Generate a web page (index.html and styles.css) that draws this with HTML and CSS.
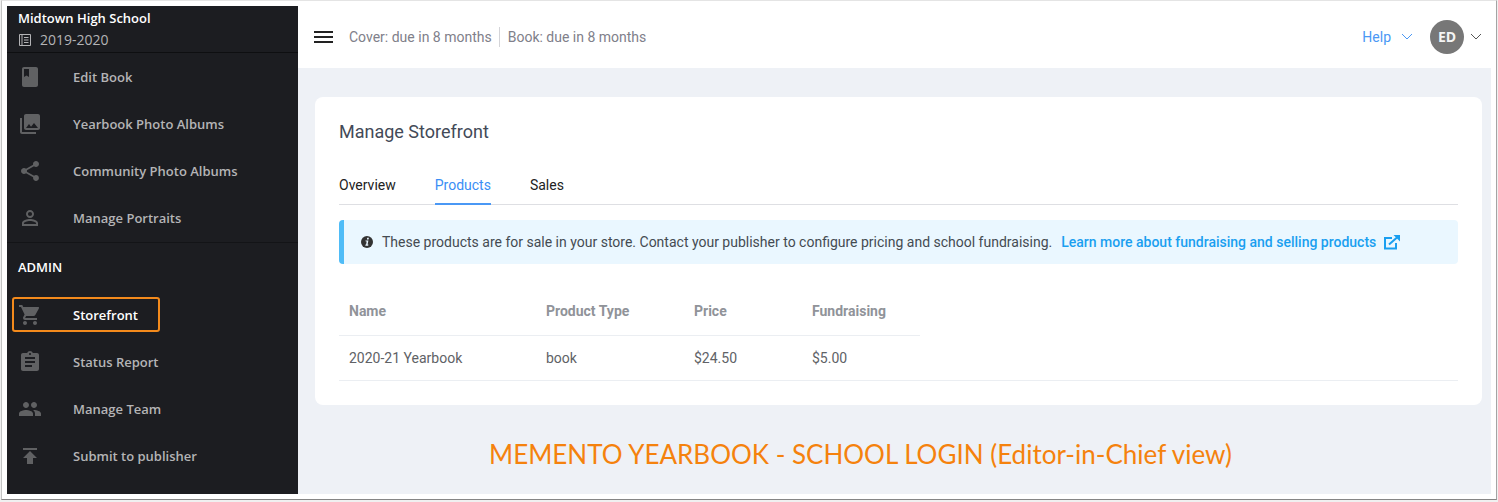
FILE: index.html
```html
<!DOCTYPE html>
<html lang="en">
<head>
<meta charset="utf-8">
<title>Manage Storefront</title>
<link rel="stylesheet" href="styles.css">
</head>
<body>
<div class="frame">
  <aside class="sidebar">
    <header class="school">
      <div class="school-name">Midtown High School</div>
      <div class="school-year">
        <svg class="year-icon" viewBox="0 0 14 14" fill="none" stroke="currentColor"><path d="M1.500 1.500h11v11h-11zM4 1.500v11M6 4.500h4.500M6 7h4.500M6 9.500h4.500"/></svg>
        <span>2019-2020</span>
      </div>
    </header>
    <nav>
      <ul class="menu">
        <li><a href="#"><svg viewBox="0 0 24 24"><path d="M18 2H6c-1.100 0-2 .9-2 2v16c0 1.100.9 2 2 2h12c1.100 0 2-.9 2-2V4c0-1.100-.9-2-2-2zM6 4h5v8l-2.500-1.500L6 12V4z"/></svg>Edit Book</a></li>
        <li><a href="#"><svg viewBox="0 0 24 24"><path d="M22 16V4c0-1.100-.9-2-2-2H8c-1.100 0-2 .9-2 2v12c0 1.100.9 2 2 2h12c1.100 0 2-.9 2-2zm-11-4l2.030 2.710L16 11l4 5H8l3-4zM2 6v14c0 1.100.9 2 2 2h14v-2H4V6H2z"/></svg>Yearbook Photo Albums</a></li>
        <li><a href="#"><svg viewBox="0 0 24 24"><path d="M18 16.080c-.76 0-1.440.3-1.960.77L8.910 12.700c.05-.23.09-.46.09-.7s-.04-.47-.09-.7l7.050-4.110c.54.5 1.250.81 2.040.81 1.660 0 3-1.340 3-3s-1.340-3-3-3-3 1.340-3 3c0 .24.04.47.09.7L8.040 9.810C7.500 9.310 6.790 9 6 9c-1.660 0-3 1.340-3 3s1.340 3 3 3c.79 0 1.500-.31 2.040-.81l7.120 4.160c-.05.21-.08.43-.08.65 0 1.610 1.310 2.920 2.920 2.920s2.920-1.310 2.920-2.920-1.310-2.920-2.920-2.920z"/></svg>Community Photo Albums</a></li>
        <li><a href="#"><svg viewBox="0 0 24 24"><path d="M12 5.900a2.100 2.100 0 1 1 0 4.200 2.100 2.100 0 0 1 0-4.200m0 9c2.970 0 6.100 1.460 6.100 2.100v1.100H5.900V17c0-.64 3.130-2.100 6.100-2.100M12 4C9.790 4 8 5.790 8 8s1.790 4 4 4 4-1.790 4-4-1.790-4-4-4zm0 9c-2.670 0-8 1.340-8 4v3h16v-3c0-2.660-5.330-4-8-4z"/></svg>Manage Portraits</a></li>
      </ul>
      <h2 class="menu-title">ADMIN</h2>
      <ul class="menu">
        <li><a href="#" class="current" aria-current="page"><svg viewBox="0 0 24 24"><path d="M7 18c-1.100 0-1.990.9-1.990 2S5.900 22 7 22s2-.9 2-2-.9-2-2-2zM1 2v2h2l3.600 7.590-1.350 2.450c-.16.28-.25.61-.25.96 0 1.100.9 2 2 2h12v-2H7.420c-.14 0-.25-.11-.25-.25l.03-.12.9-1.630h7.450c.75 0 1.410-.41 1.750-1.030l3.580-6.490A1 1 0 0 0 20 4H5.210l-.94-2H1zm16 16c-1.100 0-1.990.9-1.990 2s.89 2 1.990 2 2-.9 2-2-.9-2-2-2z"/></svg>Storefront</a></li>
        <li><a href="#"><svg viewBox="0 0 24 24"><path d="M19 3h-4.180C14.400 1.840 13.300 1 12 1s-2.400.84-2.820 2H5c-1.100 0-2 .9-2 2v14c0 1.100.9 2 2 2h14c1.100 0 2-.9 2-2V5c0-1.100-.9-2-2-2zm-7 0c.55 0 1 .45 1 1s-.45 1-1 1-1-.45-1-1 .45-1 1-1zm2 14H7v-2h7v2zm3-4H7v-2h10v2zm0-4H7V7h10v2z"/></svg>Status Report</a></li>
        <li><a href="#"><svg viewBox="0 0 24 24"><path d="M16 11c1.660 0 2.990-1.340 2.990-3S17.660 5 16 5s-3 1.340-3 3 1.340 3 3 3zm-8 0c1.660 0 2.990-1.340 2.990-3S9.660 5 8 5 5 6.340 5 8s1.340 3 3 3zm0 2c-2.330 0-7 1.170-7 3.500V19h14v-2.500C15 14.170 10.330 13 8 13zm8 0c-.29 0-.62.02-.97.05 1.160.84 1.970 1.970 1.970 3.450V19h6v-2.500c0-2.330-4.670-3.500-7-3.500z"/></svg>Manage Team</a></li>
        <li><a href="#"><svg viewBox="0 0 24 24"><path d="M5 4v2h14V4H5zm0 10h4v6h6v-6h4l-7-7-7 7z"/></svg>Submit to publisher</a></li>
      </ul>
    </nav>
  </aside>
  <div class="page">
    <header class="topbar">
      <button class="toggle" type="button" aria-label="Toggle menu"><svg viewBox="0 0 20 14"><path d="M0 1h19v2H0zM0 6h19v2H0zM0 11h19v2H0z"/></svg></button>
      <span class="due">Cover: due in 8 months</span>
      <span class="due due-next">Book: due in 8 months</span>
      <button class="help" type="button">Help<svg class="chevron" viewBox="0 0 12 8"><path d="M1 1l5 5 5-5"/></svg></button>
      <button class="account" type="button"><span class="avatar">ED</span><svg class="chevron" viewBox="0 0 12 8"><path d="M1 1l5 5 5-5"/></svg></button>
    </header>
    <main class="content">
      <section class="card">
        <h1>Manage Storefront</h1>
        <nav class="tabs">
          <a href="#">Overview</a>
          <a href="#" class="active" aria-current="page">Products</a>
          <a href="#">Sales</a>
        </nav>
        <div class="notice">
          <svg class="info" viewBox="0 0 12 12"><circle cx="6" cy="6" r="6" fill="#333"/><path d="M6.200 1.800h1.700L7.600 3.400H5.900zM4.400 4.500h3L6.600 8.600h.8L7.200 9.700H4.300l.2-1.100h.6l.6-3h-.9z" fill="#eaf7ff"/></svg>
          <span>These products are for sale in your store. Contact your publisher to configure pricing and school fundraising.</span>
          <a href="#">Learn more about fundraising and selling products<svg class="external" viewBox="0 0 17 15" fill="none" stroke="currentColor" stroke-width="2"><path d="M9 3H2v10.500h11V8M6 9.500l8-7"/><path d="M10.500 0H17v6.500z" fill="currentColor" stroke="none"/></svg></a>
        </div>
        <table class="products">
          <colgroup><col class="c-name"><col class="c-type"><col class="c-price"><col class="c-fund"><col></colgroup>
          <thead><tr><th>Name</th><th>Product Type</th><th>Price</th><th>Fundraising</th></tr></thead>
          <tbody><tr><td>2020-21 Yearbook</td><td>book</td><td>$24.50</td><td>$5.00</td><td></td></tr></tbody>
        </table>
      </section>
      <p class="caption">MEMENTO YEARBOOK - SCHOOL LOGIN (Editor-in-Chief view)</p>
    </main>
  </div>
</div>
</body>
</html>
```
FILE: styles.css
```css
* { box-sizing: border-box; }

body {
  margin: 0;
  padding: 0 1px 2px;
  min-height: 100vh;
  display: flex;
  background: #f0f0f0;
  font: 14px/20px Roboto, sans-serif;
  color: #333;
}

button {
  border: 0;
  padding: 0;
  background: none;
  font: inherit;
  cursor: pointer;
}

a { text-decoration: none; color: inherit; }

.frame {
  flex: 1;
  display: flex;
  padding: 5px;
  background: #fff;
  border: 1px solid #c4c4c4;
  border-top-color: #e4e4e4;
  border-right-color: #a4a4a4;
  border-bottom-color: #858585;
}

.sidebar {
  flex: none;
  width: 291px;
  background: #1c1d21;
  color: #b4b4b6;
  font-family: "Open Sans", sans-serif;
  font-size: 13px;
}

.school {
  padding: 2px 11px;
  border-bottom: 1px solid #0e0f11;
}

.school-name {
  color: #fff;
  font-weight: 600;
  line-height: 21px;
}

.school-year {
  display: flex;
  align-items: center;
  gap: 8px;
  line-height: 21px;
  font-size: 14px;
}

.year-icon { width: 14px; height: 14px; }

.menu {
  list-style: none;
  margin: 0;
  padding: 0;
  min-height: 189px;
  display: flex;
  flex-direction: column;
}

.menu li {
  flex: 1;
  display: flex;
  align-items: center;
  padding-left: 5px;
}

.menu a {
  display: flex;
  align-items: center;
  gap: 31px;
  height: 35px;
  padding: 0 20px 0 4px;
  border: 2px solid transparent;
  border-radius: 3px;
  font-weight: 600;
}

.menu svg { width: 24px; height: 24px; fill: #606163; }

.menu a.current { color: #fff; border-color: #f38a1c; }

.menu-title {
  margin: 0;
  padding: 0 11px;
  border-top: 1px solid #131417;
  color: #fff;
  font-size: 13px;
  font-weight: 600;
  line-height: 48px;
}

.page {
  flex: 1;
  min-width: 0;
  display: flex;
  flex-direction: column;
  background: #eef1f6;
}

.topbar {
  display: flex;
  align-items: center;
  height: 62px;
  padding: 0 9px 0 16px;
  background: #fff;
}

.toggle { display: flex; margin-right: 15px; }
.toggle svg { width: 20px; height: 14px; fill: #222; }

.due { color: #80808a; }

.due-next {
  margin-left: 7px;
  padding-left: 8px;
  border-left: 1px solid #d4d4d8;
}

.help {
  margin-left: auto;
  display: flex;
  align-items: center;
  gap: 10px;
  color: #4a98f5;
}

.chevron {
  width: 12px;
  height: 8px;
  fill: none;
  stroke: currentColor;
}

.account {
  display: flex;
  align-items: center;
  gap: 6px;
  margin-left: 17px;
  color: #555;
}

.avatar {
  width: 34px;
  line-height: 34px;
  border-radius: 50%;
  background: #777;
  color: #f4f4f4;
  font-family: "Open Sans", sans-serif;
  font-weight: 700;
  text-align: center;
}

.content { padding: 29px 9px 0 17px; }

.card {
  padding: 23px 24px 24px;
  border-radius: 8px;
  background: #fff;
}

h1 {
  margin: 0;
  color: #434a57;
  font-size: 18px;
  font-weight: 400;
  line-height: 24px;
}

.tabs {
  display: flex;
  gap: 39px;
  margin-top: 24px;
  border-bottom: 1px solid #dedfe3;
}

.tabs a { padding: 7px 0 8px; color: #222; }

.tabs .active {
  margin-bottom: -1px;
  border-bottom: 2px solid #4a98f5;
  color: #3a8ef5;
}

.notice {
  display: flex;
  align-items: center;
  gap: 9px;
  margin-top: 15px;
  padding: 12px 17px;
  border-left: 5px solid #4fbcf7;
  border-radius: 4px;
  background: #eaf7ff;
  color: #444b52;
}

.info { flex: none; width: 12px; height: 12px; }

.notice a {
  display: flex;
  align-items: center;
  gap: 7px;
  color: #1a9ff0;
  font-weight: 500;
}

.external { width: 17px; height: 15px; }

.products {
  width: 100%;
  margin-top: 24px;
  table-layout: fixed;
  border-collapse: collapse;
  color: #606266;
}

.c-name { width: 197px; }
.c-type { width: 148px; }
.c-price { width: 118px; }
.c-fund { width: 118px; }

.products th,
.products td {
  padding: 12px 10px;
  border-bottom: 1px solid #ebeef2;
  text-align: left;
}

.products th {
  padding: 13px 10px 14px;
  color: #909399;
  font-weight: 700;
}

.caption {
  margin: 33px 0 0;
  padding-right: 76px;
  color: #f5820d;
  font: 26px/32px Lato, sans-serif;
  text-align: center;
}
```
